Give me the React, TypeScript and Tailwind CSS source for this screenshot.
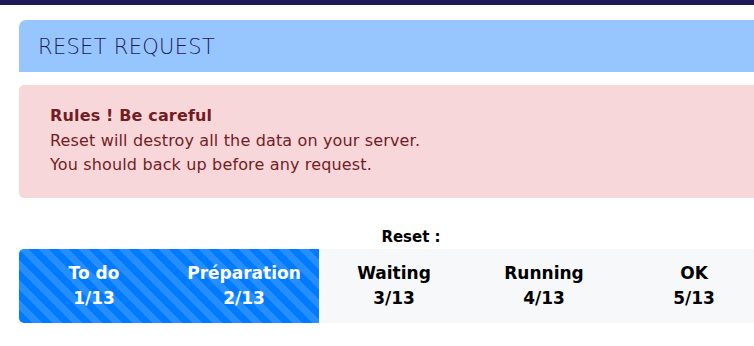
import React from 'react';

const steps = [
  { label: 'To do', count: '1/13', done: true },
  { label: 'Préparation', count: '2/13', done: true },
  { label: 'Waiting', count: '3/13', done: false },
  { label: 'Running', count: '4/13', done: false },
  { label: 'OK', count: '5/13', done: false },
];

const Step: React.FC<{ label: string; count: string; done: boolean }> = ({ label, count, done }) => (
  <div
    className={`w-[150px] flex flex-col items-center justify-center font-bold text-[17px] leading-[25px] ${
      done ? 'text-white' : 'text-black'
    }`}
  >
    <span>{label}</span>
    <span>{count}</span>
  </div>
);

const App: React.FC = () => {
  const done = steps.filter((s) => s.done);
  const rest = steps.filter((s) => !s.done);

  return (
    <div className="w-[754px] h-[346px] overflow-hidden bg-white font-['DejaVu_Sans',sans-serif]">
      {/* Top bar */}
      <div className="h-[5px] bg-[#1e1a5a]" />

      <div className="ml-[19px] w-[784px] pt-[15px]">
        {/* Card header */}
        <div className="h-[52px] rounded-tl-[7px] bg-[#97c6fe] pl-[19px] pt-[3px] flex items-center">
          <h1 className="text-[21px] font-light text-[#1e1a5a] tracking-[0.3px]">RESET REQUEST</h1>
        </div>

        {/* Alert */}
        <div className="mt-[13px] rounded-[5px] bg-[#f8d7da] pl-[31px] pt-[19px] pb-[20px] text-[16px] leading-[24.5px] tracking-[0.15px] text-[#721c24]">
          <p className="font-bold">Rules ! Be careful</p>
          <p>Reset will destroy all the data on your server.</p>
          <p>You should back up before any request.</p>
        </div>

        {/* Progress */}
        <div className="mt-[28px] w-[784px] text-center text-[15px] leading-[22px] font-bold text-black">Reset :</div>
        <div className="mt-[1px] h-[74px] flex rounded-l-[5px] overflow-hidden bg-[#f7f8fa]">
          <div className="flex bg-[#007bff] bg-[linear-gradient(45deg,rgba(255,255,255,.15)_25%,transparent_25%,transparent_50%,rgba(255,255,255,.15)_50%,rgba(255,255,255,.15)_75%,transparent_75%,transparent)] bg-size-[20px_20px]">
            {done.map((s) => (
              <Step key={s.label} {...s} />
            ))}
          </div>
          {rest.map((s) => (
            <Step key={s.label} {...s} />
          ))}
        </div>
      </div>
    </div>
  );
};

export default App;
